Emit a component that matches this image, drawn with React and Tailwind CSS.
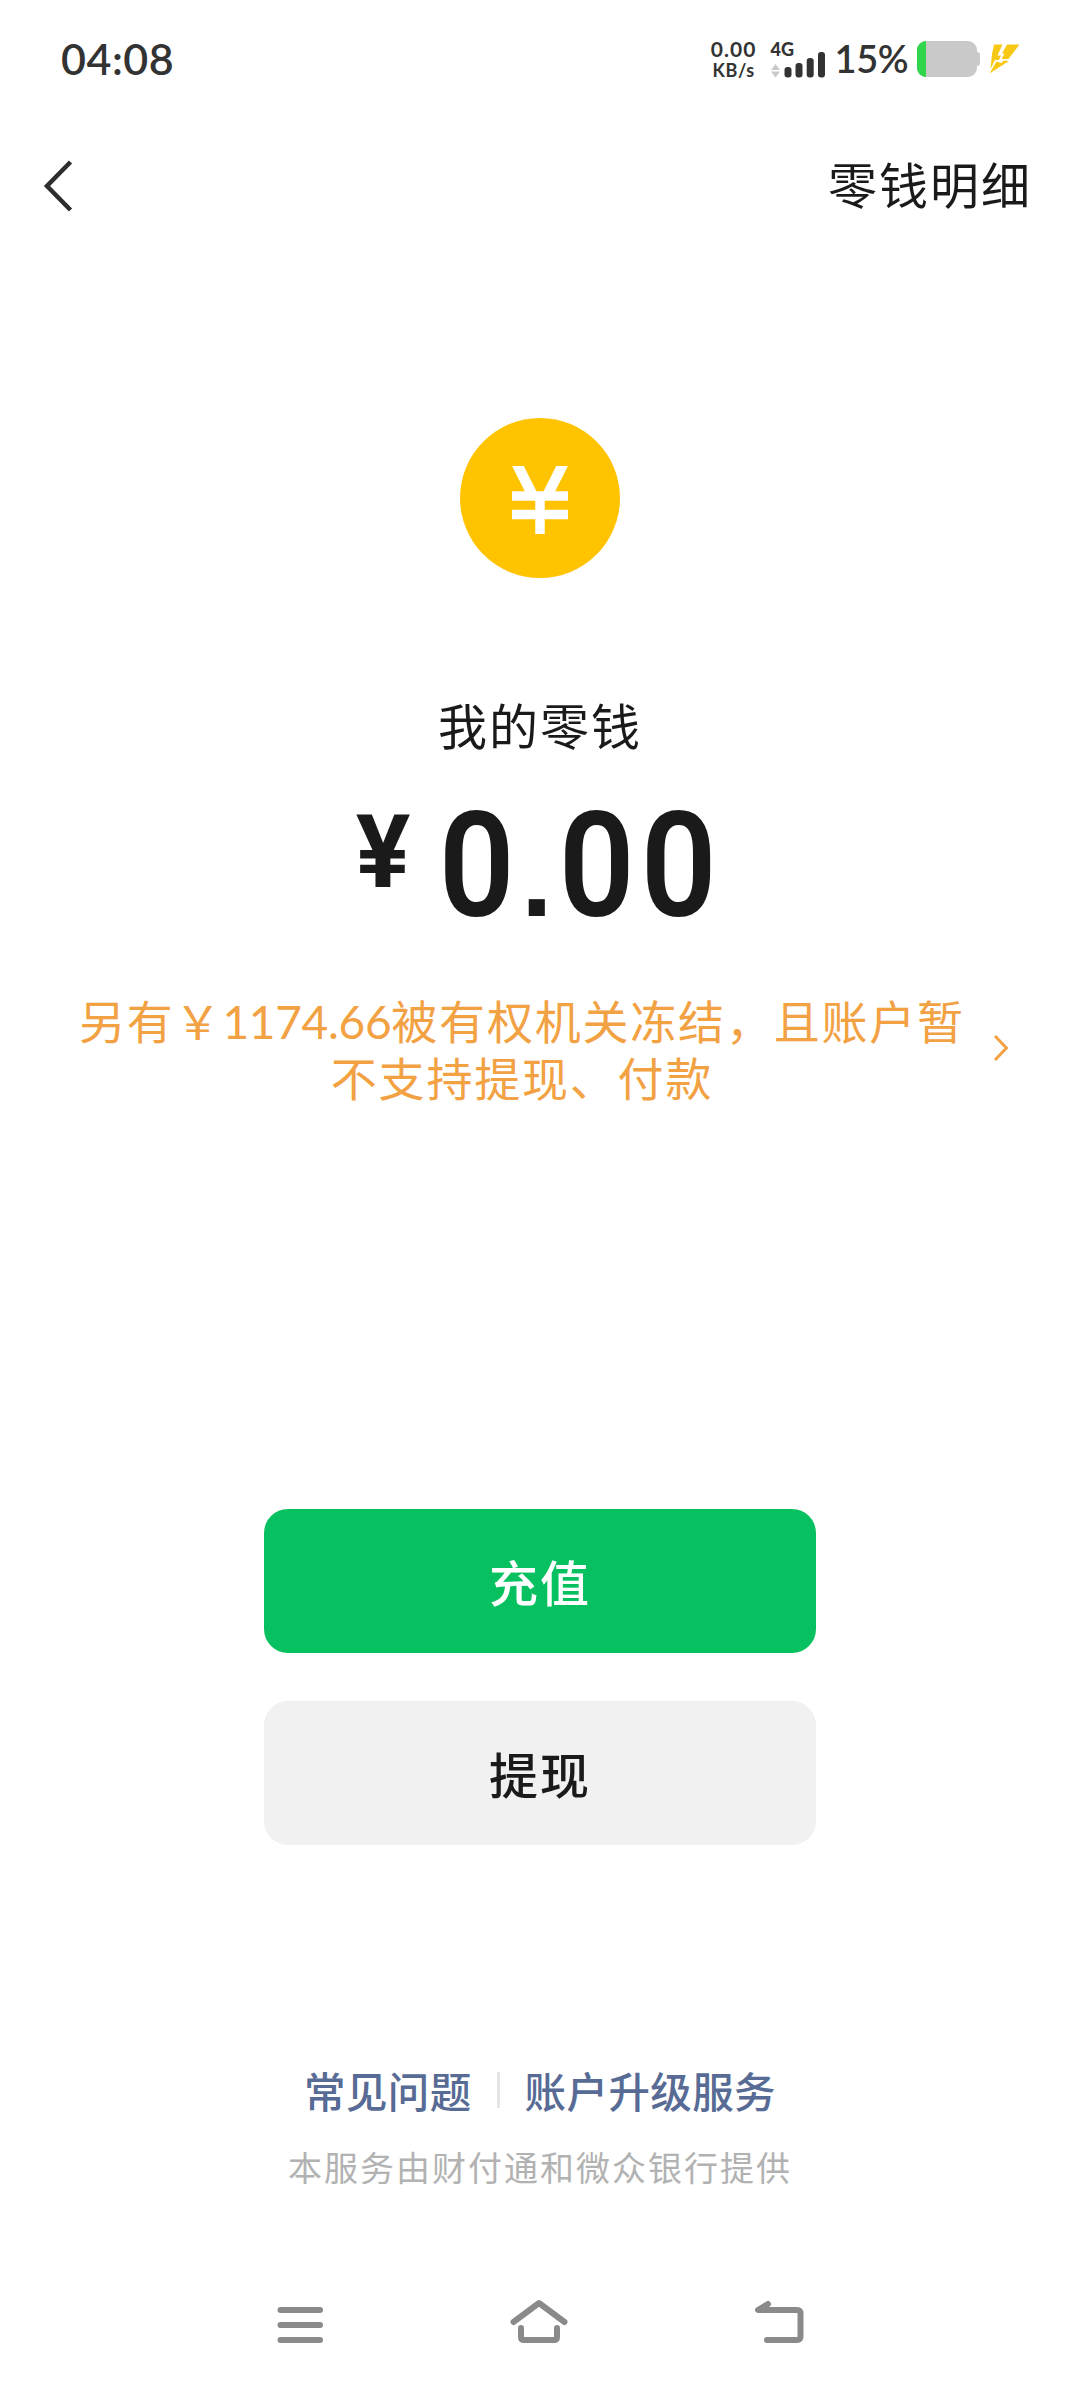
const LINKS = ["常见问题", "账户升级服务"];

function StatusBar() {
    return (
        <header className="flex h-[118px] items-center justify-between pl-[61px] pr-[60px] font-[Lato,sans-serif] text-[#333]">
            <span className="pb-[2px] text-[43px] font-semibold leading-none tracking-[0.5px]">04:08</span>
            <div className="flex items-center">
                <div className="flex w-[50px] flex-col items-center font-bold">
                    <span className="text-[21px] leading-[22px] tracking-[1px]">0.00</span>
                    <span className="text-[18px] leading-[20px] tracking-[0.6px]">KB/s</span>
                </div>
                <div className="ml-[12px] flex h-[38px] w-[56px] flex-col">
                    <span className="text-[18px] font-black leading-[18px]">4G</span>
                </div>
                <SignalIcon />
                <span className="ml-[9px] pb-[2px] text-[38px] font-semibold leading-none tracking-[-0.5px]">15%</span>
                <BatteryIcon />
                <BoltIcon />
            </div>
        </header>
    );
}

function SignalIcon() {
    return (
        <svg className="-ml-[57px] h-[38px] w-[56px]" viewBox="772 40 56 38">
            <path d="M773 70l4.500-6 4.500 6zM773 71.500h9l-4.500 6z" fill="#c9c9c9" />
            <g fill="#333">
                <rect x="786.500" y="67" width="7" height="10.500" rx="3" />
                <rect x="797.500" y="63" width="7" height="14.500" rx="3" />
                <rect x="808.700" y="58" width="7" height="19.500" rx="3" />
                <rect x="820" y="52" width="7" height="25.500" rx="3" />
            </g>
        </svg>
    );
}

function BatteryIcon() {
    return (
        <div className="ml-[9px] flex items-center">
            <div className="h-9 w-[60px] overflow-hidden rounded-[9px] bg-[#c9c9c9]">
                <div className="h-full w-[9px] bg-[#2fd54b]" />
            </div>
            <div className="h-3.5 w-[3px] rounded-r-[3px] bg-[#c9c9c9]" />
        </div>
    );
}

function BoltIcon() {
    return (
        <svg className="ml-[9px] h-[30px] w-[31px]" viewBox="990 44 31 30" fill="#f7c914">
            <path d="M995 44.500h8.500l-5 11h3.500l-2 4.500h-4l-4.500 9 1.500-15z" />
            <path d="M1008 44.500h12.500l-11 14.500h-7l3-5.500h-2.500z" />
            <path d="M997.500 61.500l5 1.500 2-2.500 5.500.5-19.500 12.500z" />
        </svg>
    );
}

function BackIcon() {
    return (
        <svg className="h-[52px] w-[30px]" viewBox="0 0 30 52" fill="none" stroke="#2e2e2e" strokeWidth="4.500">
            <path d="M27.500 2L4 26l23.500 24" />
        </svg>
    );
}

function CoinIcon() {
    return (
        <svg className="size-40" viewBox="0 0 160 160">
            <circle cx="80" cy="80" r="80" fill="#ffc300" />
            {/* nested viewport trims the arms flat at the top */}
            <svg x="50" y="48" width="60" height="69" viewBox="50 48 60 69" fill="none" stroke="#fff">
                <path d="M55.400 43L73 78M104.600 43L87 78" strokeWidth="10.500" />
                <path d="M52 78h56M52 96.500h56M80 74v42" strokeWidth="9.500" />
            </svg>
        </svg>
    );
}

function NavBar() {
    return (
        <nav className="flex h-[46px] items-center justify-between px-[276px]">
            <svg className="h-[46px] w-12" viewBox="276 2299 48 46" fill="none" stroke="#8a8a8a" strokeWidth="6" strokeLinecap="round">
                <path d="M280.500 2310h39.500M280.500 2325h39.500M280.500 2340h39.500" />
            </svg>
            <svg className="h-[46px] w-[60px]" viewBox="510 2299 60 46" fill="none" stroke="#8a8a8a" strokeWidth="6" strokeLinecap="round" strokeLinejoin="round">
                <path d="M514.500 2322l25.500-19 25.500 19" />
                <path d="M522 2328v9q0 3 3 3h30q3 0 3-3v-9" />
            </svg>
            <svg className="h-[46px] w-[50px]" viewBox="755 2299 50 46" fill="none" stroke="#8a8a8a" strokeWidth="6" strokeLinecap="round" strokeLinejoin="round">
                <path d="M769 2304l-10 6h39q3.500 0 3.500 3.500v23q0 3.500-3.500 3.500h-30" />
            </svg>
        </nav>
    );
}

export default function App() {
    return (
        <div className="flex h-[2388px] w-[1080px] flex-col bg-white font-['Noto_Sans_CJK_SC',sans-serif] text-[#1a1a1a]">
            <StatusBar />

            <div className="flex h-[136px] items-center justify-between pl-[43px] pr-[48px]">
                <BackIcon />
                <span className="pb-[6px] text-[49px] leading-[72px] tracking-[2px]">零钱明细</span>
            </div>

            <main className="flex flex-col items-center pt-[164px]">
                <CoinIcon />
                <h1 className="mt-[110px] text-[49px] leading-[72px] tracking-[2px]">我的零钱</h1>
                <div className="mr-[6px] mt-[35px] flex h-36 items-start font-[Roboto,sans-serif] font-bold leading-none">
                    <span className="mt-[15px] text-[102px] leading-[84px]">¥</span>
                    <span className="ml-[25px] text-[146px] font-semibold leading-[144px] tracking-[-1.8px]">
                        <span className="inline-block origin-center scale-x-[0.91]">0</span>
                        <span className="mx-[4px] font-['Liberation_Sans',sans-serif] text-[114px] font-bold">.</span>
                        <span className="inline-block origin-center scale-x-[0.91]">0</span>
                        <span className="inline-block origin-center scale-x-[0.91]">0</span>
                    </span>
                </div>

                <div className="mt-[52px] flex w-full items-center pl-[70px] pr-[71px] text-[#f2a143]">
                    <p className="w-[904px] whitespace-nowrap text-center text-[46px] leading-[57px] tracking-[1.8px]">
                        另有￥<span className="font-[Lato,sans-serif] leading-none tracking-[-0.3px]">1174.66</span>被有权机关冻结，且账户暂
                        <br />
                        不支持提现、付款
                    </p>
                    <svg className="ml-auto h-[28px] w-[16px]" viewBox="0 0 16 28" fill="none" stroke="currentColor" strokeWidth="3">
                        <path d="M2 2l11.500 12L2 26" />
                    </svg>
                </div>

                <div className="mt-[404px] flex flex-col gap-12 text-[49px] font-medium tracking-[2px]">
                    <button className="h-36 w-[552px] rounded-[24px] bg-[#07c160] text-white">充值</button>
                    <button className="h-36 w-[552px] rounded-[24px] bg-[#f1f1f1]">提现</button>
                </div>
            </main>

            <footer className="mt-[215px] flex flex-col items-center">
                <div className="flex items-center text-[41.500px] font-medium leading-[60px] tracking-[0.4px] text-[#576b95]">
                    <a>{LINKS[0]}</a>
                    <i className="mx-[25px] h-9 w-[3px] bg-[#e5e5e5]" />
                    <a>{LINKS[1]}</a>
                </div>
                <p className="mt-[22px] text-[34px] leading-[50px] tracking-[2px] text-[#b2b2b2]">本服务由财付通和微众银行提供</p>
            </footer>

            <div className="mt-auto pb-[43px]">
                <NavBar />
            </div>
        </div>
    );
}
